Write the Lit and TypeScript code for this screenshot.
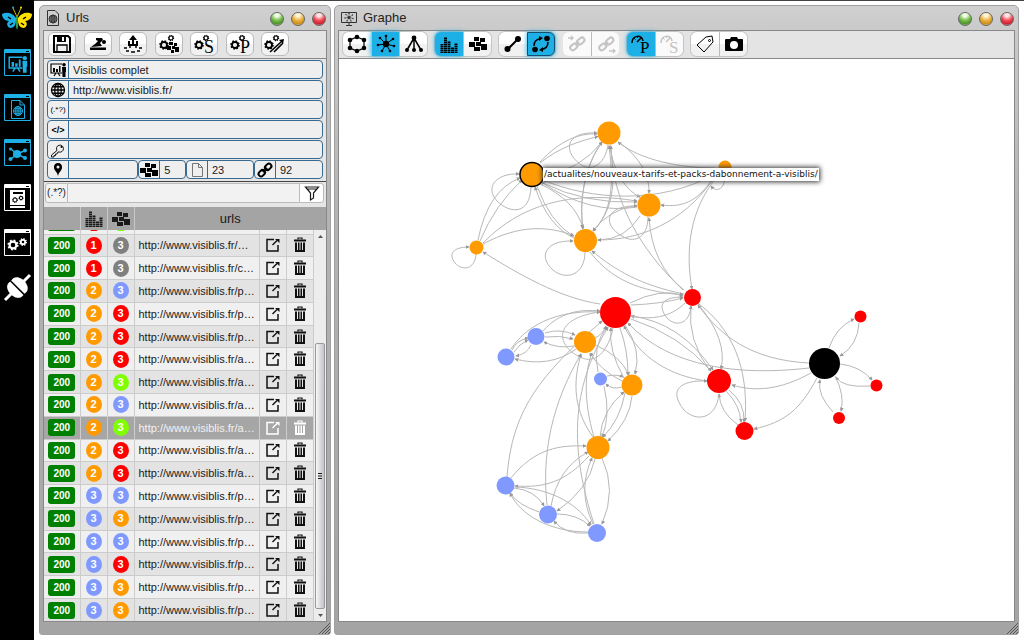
import { LitElement, html, svg, css, TemplateResult } from "lit";
import { classMap } from "lit/directives/class-map.js";

/* ---------- icon building blocks ---------- */

const icon = (w: number, h: number, body: unknown): TemplateResult =>
  html`<svg class="icon" width=${w} height=${h} viewBox="0 0 ${w} ${h}" aria-hidden="true">${body}</svg>`;

const dot = (x: number, y: number, r: number) => svg`<circle cx=${x} cy=${y} r=${r} fill="currentColor"/>`;

const line = (d: string, w = 1) =>
  svg`<path d=${d} fill="none" stroke="currentColor" stroke-width=${w}/>`;

const fill = (d: string) => svg`<path d=${d} fill="currentColor"/>`;

const gear = (x: number, y: number, r: number, w = 2) => {
  const tooth = (2 * Math.PI * (r + w / 2)) / 16;
  return svg`<circle cx=${x} cy=${y} r=${r} fill="none" stroke="currentColor" stroke-width=${w}/>
    <circle cx=${x} cy=${y} r=${r + w / 2} fill="none" stroke="currentColor" stroke-width=${w}
      stroke-dasharray="${tooth} ${tooth}"/>`;
};

const twoGears = svg`${gear(5, 11, 3, 1.8)}${gear(12, 4, 2, 1.2)}`;

const letter = (t: string, x: number, y: number, size = 14) =>
  svg`<text x=${x} y=${y} font-family="Liberation Serif, serif" font-size=${size} fill="currentColor">${t}</text>`;

const globe = (x: number, y: number, r: number, w = 1) => svg`<g fill="none" stroke="currentColor" stroke-width=${w}>
  <circle cx=${x} cy=${y} r=${r}/><ellipse cx=${x} cy=${y} rx=${r / 2} ry=${r}/>
  <path d="M${x} ${y - r}V${y + r}M${x - r} ${y}H${x + r}M${x - r * 0.85} ${y - r / 2}H${x + r * 0.85}M${x - r * 0.85} ${y + r / 2}H${x + r * 0.85}"/></g>`;

const blocks = icon(18, 16, fill("M5 1H10V5H5ZM11 2H16V6H11ZM0 6H6V11H0ZM7 6H12V10H7ZM5 11H11V15H5ZM12 8H18V14H12Z"));

const histogram = icon(18, 17, svg`<g stroke="currentColor" stroke-width="3" stroke-dasharray="1.4 .6">
  <path d="M2 17V8M5.500 17V1M9 17V5M12.500 17V11M16 17V7"/></g>`);

/* easel with a bar chart and a presenter on the right */
const bridge = (x: number, y: number) => svg`<g transform="translate(${x} ${y})">
  ${line("M12 1H1V10H12M4 13L6 10M10 13L8 10", 1.2)}${fill("M3 5H5V9H3ZM6 6H8V9H6ZM9 3H10.500V9H9Z")}
  ${dot(14, 1.8, 1.8)}${fill("M12 4H16V9H15.500V14H12.500Z")}</g>`;

const chain = svg`<g fill="none" stroke="currentColor" stroke-width="2" transform="rotate(-45 8 8)">
  <rect x="0" y="5.500" width="7" height="5" rx="2.500"/><rect x="9" y="5.500" width="7" height="5" rx="2.500"/>
  <path d="M5 8H11"/></g>`;

const chainPale = (arrow: string) => icon(20, 20, svg`<g transform="translate(3 2)"><g fill="none"
  stroke="currentColor" stroke-width="2" transform="rotate(-40 8 8)"><rect x="-1" y="5" width="8" height="5" rx="2.500"/>
  <rect x="8" y="5" width="8" height="5" rx="2.500"/><path d="M5 7.500H10"/></g></g>${line(arrow, 1.3)}`);

const dial = svg`${line("M1 9C1 1 11 0 12 7M6 8L10 4", 1.5)}${line("M3 4L4.500 5.500M6.500 2V4", 1)}`;

/* ---------- sidebar ---------- */

const frame = (body: unknown) =>
  icon(27, 27, svg`${line("M.5 .5H26.500V26.500H.5Z")}${fill("M1 1H26V4H1Z")}
    <path d="M22 2H25V3H22Z" fill="#000"/>${body}`);

const butterfly = icon(32, 27, svg`
  <path d="M15 14C11 8 5 8 1 10C1 14 4 17 8 17C5 19 6 23 9 24C13 24 15 21 15 16Z" fill="#1cb0e6"/>
  <path d="M17 14C21 8 27 8 31 10C31 14 28 17 24 17C27 19 26 23 23 24C19 24 17 21 17 16Z" fill="#ffe000"/>
  <path d="M16 13L12 4M16 13L20 4" stroke="#c9b800" fill="none"/>
  <circle cx="12" cy="3.500" r="1" fill="#1cb0e6"/><circle cx="20" cy="3.500" r="1" fill="#ffe000"/>
  <path d="M15 12H17V23L16 26L15 23Z" fill="#2f9a4a"/>
  <path d="M7 13L10 15M12 19L9 21M25 13L22 15M20 19L23 21" stroke="#000" stroke-width="1.500" fill="none"/>`);

const NAV = [
  { name: "Accueil", tone: "", art: butterfly },
  { name: "Projets", tone: "blue", art: frame(svg`<g transform="translate(4 7) scale(1.200)">${bridge(0, 0)}</g>`) },
  { name: "Urls", tone: "blue", art: frame(svg`${line("M7.500 6.500H16L20.500 11V24.500H7.500Z")}${line("M16 6.500V11H20")}${globe(14, 17, 4.5)}`) },
  { name: "Graphe", tone: "blue", art: frame(svg`${line("M13 15L7 10M13 15L20 12M13 15L21 19M13 15L7 20", 1.5)}
      ${dot(13, 15, 4)}${dot(6.5, 10, 1.5)}${dot(21, 11.5, 2)}${dot(21, 19, 2)}${dot(6.5, 20, 2)}`) },
  { name: "Rapports", tone: "white", art: frame(svg`${fill("M6 6H21V24H6Z")}<g color="#000">
      ${fill("M9 8H19V10H9ZM6 21H21V22H6Z")}${gear(11, 16, 2, 1)}${gear(17, 14, 1.6, 1)}</g>`) },
  { name: "Réglages", tone: "white", art: frame(svg`${gear(9, 16, 3.4, 2.2)}${gear(19, 13, 2.2, 1.8)}`) },
  { name: "Connexion", tone: "white", art: icon(27, 27, svg`${line("M26 1L19 8M8 19L1 26", 3)}
      <g transform="rotate(45 13.500 13.500)">
      ${fill("M4 13V10C5 2 22 2 23 10V13ZM4 14.500V17C5 25 22 25 23 17V14.500Z")}</g>`) },
];

/* ---------- toolbars ---------- */

const URL_TOOLS = [
  { name: "Enregistrer", art: icon(20, 20, svg`${line("M2 2H16L18 4V18H2Z", 2)}${fill("M5 2H14V8H5Z")}${line("M5 18V11H15V18", 1.3)}
      <path d="M10 3H12V7H10Z" fill="#fff"/>`) },
  { name: "Explorer", art: icon(20, 18, svg`${fill("M8 3L14 3L15 5L12 8L14 11L3 12L7 9L10 6L8 5Z")}${dot(16, 7, 2)}${fill("M2 12.500H18V15H2Z")}`) },
  { name: "Importer", art: icon(20, 20, svg`${line("M6 7V11H14V7M10 10V5", 2)}${fill("M6 6L10 1L14 6Z")}
      ${line("M1 14H4M6 13H8M12 13H14M16 14H19M3 17H6M8 18H12M14 17H17", 1.4)}`) },
  { name: "Calculer les groupes", art: icon(20, 20, svg`${twoGears}${fill("M10 8H14V11H10ZM15 9H18V12H15ZM8 12H12V16H8ZM13 12H16V15H13ZM12 16H15V19H12ZM16 13H20V18H16Z")}`) },
  { name: "Calculer S", art: icon(20, 20, svg`${twoGears}${letter("S", 10, 19, 18)}`) },
  { name: "Calculer P", art: icon(20, 20, svg`${twoGears}${letter("P", 10, 19, 18)}`) },
  { name: "Calculer les liens", art: icon(22, 20, svg`${twoGears}${line("M6 18L17 8M10 18L19 9", 1.6)}${fill("M15 6L20 5L19 10Z")}`) },
];

const star = svg`${line("M10 10L4 4M10 10L10 2M10 10L17 5M10 10L18 12M10 10L14 17M10 10L6 17M10 10L2 11", 1)}
  ${dot(10, 10, 3.2)}${dot(4, 4, 1.3)}${dot(10, 2, 1.3)}${dot(17, 5, 1.3)}${dot(18, 12, 1.3)}${dot(14, 17, 1.3)}${dot(6, 17, 1.3)}${dot(2, 11, 1.3)}`;

const GRAPH_TOOLS = [
  { off: false, items: [
    { name: "Cercle", on: false, art: icon(20, 20, svg`${line("M10 3L17 6V14L10 17L3 14V6Z", 1.2)}
        ${dot(10, 3, 2.3)}${dot(17, 6, 2.3)}${dot(17, 14, 2.3)}${dot(10, 17, 2.3)}${dot(3, 14, 2.3)}${dot(3, 6, 2.3)}`) },
    { name: "Force", on: true, art: icon(20, 20, star) },
    { name: "Arbre", on: false, art: icon(20, 20, svg`${line("M10 4L3 16M10 4V16M10 4L17 16", 1.5)}
        ${dot(10, 4, 2.4)}${dot(3, 16, 2)}${dot(10, 16, 2)}${dot(17, 16, 2)}`) } ] },
  { off: false, items: [
    { name: "Niveaux", on: true, art: histogram },
    { name: "Groupes", on: false, art: blocks } ] },
  { off: false, items: [
    { name: "Lien simple", on: false, art: icon(20, 20, svg`${line("M5 15L15 5", 2)}${dot(4.5, 15, 3)}${dot(15, 5, 3)}`) },
    { name: "Liens orientés", on: true, framed: true, art: icon(20, 20, svg`${line("M3 12C3 7 6 5 10 4.500M17 8C17 13 14 15 10 15.500", 1.6)}
        ${dot(16, 4.5, 2.8)}${dot(4, 15.5, 2.8)}${fill("M8 2V7L12 4ZM12 13V18L8 16Z")}`) } ] },
  { off: true, items: [
    { name: "Liens entrants", on: false, art: chainPale("M1 4H6M4 2L6 4L4 6") },
    { name: "Liens sortants", on: false, art: chainPale("M13 17H19M17 15L19 17L17 19") } ] },
  { off: false, items: [
    { name: "Poids P", on: true, art: icon(20, 20, svg`${dial}${letter("P", 9, 19, 17)}`) },
    { name: "Poids S", on: false, off: true, art: icon(20, 20, svg`${dial}${letter("S", 9, 19, 17)}`) } ] },
  { off: false, items: [
    { name: "Étiquettes", on: false, art: icon(20, 20, svg`${line("M2 11L11 3L17 2L18 8L9 18Z", 1)}${line("M13.500 6.500A1 1 0 1 0 15.500 6.500A1 1 0 1 0 13.500 6.500")}`) },
    { name: "Capture", on: false, art: icon(20, 18, svg`${fill("M2 4H6L7 2H13L14 4H18Q19 4 19 5V15Q19 16 18 16H2Q1 16 1 15V5Q1 4 2 4Z")}
        <circle cx="10" cy="10" r="4" fill="#fff"/>`) } ] },
];

/* ---------- project fields ---------- */

const FIELDS = [
  { name: "Projet", value: "Visiblis complet", art: icon(18, 15, bridge(1, 1)) },
  { name: "Adresse", value: "http://www.visiblis.fr/", art: icon(16, 16, globe(8, 8, 6.5, 1.3)) },
  { name: "Filtre", value: "", art: html`<span class="glyph">(.*?)</span>` },
  { name: "Balise", value: "", art: html`<span class="glyph strong">&lt;/&gt;</span>` },
  { name: "Clé", value: "", art: icon(16, 16, svg`${line("M7 8.500A3.500 3.500 0 1 1 9 10L8 10L7 12H5.500V13.500H4V15H1.500V13L7 8.500Z", 0.9)}${dot(11.5, 5, 1)}`) },
];

const STATS = [
  { name: "Position", value: "", cls: "s0", art: icon(16, 16, svg`<path fill="currentColor" fill-rule="evenodd"
      d="M8 1A4 4 0 0 1 12 5.500C12 9 8 10 8 15C8 10 4 9 4 5.500A4 4 0 0 1 8 1ZM8 3.500A1.500 1.500 0 1 0 8 6.500A1.500 1.500 0 1 0 8 3.500Z"/>`) },
  { name: "Groupes", value: "5", cls: "s1", art: blocks },
  { name: "Pages", value: "23", cls: "s2", art: icon(16, 16, svg`<g color="#777">${line("M3.500 1.500H9.500L13.500 5.500V14.500H3.500ZM9.500 1.500V5.500H13.500")}</g>`) },
  { name: "Liens", value: "92", cls: "s3", art: icon(16, 16, chain) },
];

/* ---------- url rows ---------- */

type Row = [number, string, number, string, string];
const ROWS: Row[] = [
  [1, "red", 3, "gray", "…"],
  [1, "red", 3, "gray", "c…"],
  [2, "orange", 3, "sky", "p…"],
  [2, "orange", 3, "red", "p…"],
  [2, "orange", 3, "red", "p…"],
  [2, "orange", 3, "red", "a…"],
  [2, "orange", 3, "lime", "a…"],
  [2, "orange", 3, "sky", "a…"],
  [2, "orange", 3, "lime", "a…"],
  [2, "orange", 3, "red", "a…"],
  [2, "orange", 3, "red", "a…"],
  [3, "sky", 3, "sky", "p…"],
  [3, "sky", 3, "orange", "p…"],
  [3, "sky", 3, "sky", "p…"],
  [3, "sky", 3, "red", "p…"],
  [3, "sky", 3, "orange", "p…"],
  [3, "sky", 3, "orange", "p…"],
];
const SELECTED = 8;

const openIcon = icon(16, 16, svg`${line("M9 2.500H2V14H13V8", 1.5)}${line("M7.500 8L12 3.500", 1.5)}${fill("M10 2H14.500V6Z")}`);
const trashIcon = icon(14, 16, svg`${line("M5 2.500V1H9V2.500", 1.2)}${fill("M1 2.500H13V4.500H1ZM2 5.500H4V14H2ZM5 5.500H6.500V14H5ZM7.500 5.500H9V14H7.500ZM10 5.500H12V14H10ZM2 13H12V15H2Z")}`);

/* ---------- graph ---------- */

const NODES: [number, number, number, string][] = [
  [609, 133, 11.5, "#ff9b00"], [725, 167, 6.5, "#ff9b00"], [649, 205, 11.5, "#ff9b00"],
  [585.5, 240.5, 11.5, "#ff9b00"], [476.5, 247.5, 7, "#ff9b00"], [615.5, 312.5, 15.5, "#f00"],
  [692.5, 297.5, 8.5, "#f00"], [536, 336.5, 8.5, "#8099ff"], [506, 357, 8.5, "#8099ff"],
  [585, 342, 11, "#ff9b00"], [600.5, 379, 6.5, "#8099ff"], [632, 385, 10.5, "#ff9b00"],
  [598, 447.5, 11.5, "#ff9b00"], [505.5, 485.5, 9, "#8099ff"], [548, 514.5, 9, "#8099ff"],
  [597, 533, 9, "#8099ff"], [719, 381, 12, "#f00"], [744.5, 431, 9, "#f00"],
  [824.5, 363.5, 15.5, "#000"], [860.5, 316.5, 6, "#f00"], [876.5, 385.5, 6, "#f00"], [839, 418, 6, "#f00"],
];

const EDGES = [
  "M540 162C560 140 580 133 597 134", "M540 163C560 147 580 141 598 136.500",
  "M608 145C605 163 594 171 583 166C563 154 563 131 597 133",
  "M583 228C578 195 588 160 602 142", "M602 143C588 160 578 195 583 229",
  "M545 175Q580 170 602 142", "M610 145C617 185 612 212 593 231",
  "M610 146C613 170 625 190 640 197", "M683 290C640 250 612 200 611 146",
  "M593 231C612 212 614 185 609 146",
  "M715 168C680 168 640 160 618 142", "M619 142Q650 165 649 193",
  "M715 174C660 205 590 200 543 180", "M543 183Q585 204 637 202", "M637 207Q590 215 541 182",
  "M537 186Q550 222 573 236", "M574 238Q548 226 535 187", "M540 184Q575 200 583 228",
  "M478 240Q488 190 520 178", "M480 241Q495 205 522 180",
  "M531 187C530 215 510 214 497 201C485 188 495 173 519 174",
  "M483 243C520 205 570 190 637 201", "M483 244C520 224 550 226 574 236",
  "M476 254C475 270 462 271 455 263C448 254 453 247 469 247",
  "M600 304C560 298 520 275 483 252",
  "M585 252C585 275 566 281 553 270C538 257 545 240 573 241",
  "M716 175C690 215 650 240 598 240", "M716 173C700 200 685 208 661 205",
  "M716 178C690 210 685 250 692 289", "M725 173C726 190 716 193 711 186",
  "M640 216Q625 240 598 240", "M637 205Q608 210 593 231",
  "M648 217C648 240 632 243 622 236C602 225 605 205 637 206",
  "M684 290Q652 265 649 218", "M590 252C615 285 650 292 683 295", "M684 294C640 285 615 270 592 251",
  "M630 303Q660 288 683 295", "M631 305Q660 304 683 298", "M685 303C670 318 650 320 631 316",
  "M691 306C690 323 677 328 667 318C657 305 662 297 683 297",
  "M631 316Q680 322 713 370", "M631 319Q680 335 711 371",
  "M707 381C670 376 640 358 624 326", "M809 368C740 376 670 368 628 323",
  "M809 363C750 360 720 335 698 305", "M698 304Q728 340 721 369", "M710 371Q687 340 691 306",
  "M699 304C740 335 748 380 745 421", "M726 391Q740 405 741 422", "M729 390Q745 403 744 422",
  "M738 425Q720 412 719 394", "M719 394C716 420 696 422 684 410C668 390 680 380 707 381",
  "M811 373C780 390 755 392 732 385", "M817 378C800 410 785 422 754 429",
  "M829 348Q836 327 854 319", "M859 323Q858 345 840 356",
  "M840 364Q860 366 872 380", "M870 386Q842 388 836 377",
  "M835 376Q845 395 841 411", "M833 412Q817 395 820 380",
  "M543 331C560 312 580 309 600 311", "M511 349C530 320 565 310 600 312",
  "M545 333Q560 328 575 335", "M545 337Q560 335 573 339", "M574 346Q558 349 544 342",
  "M512 350Q517 340 528 338", "M514 352Q519 344 528 340", "M531 345Q527 354 516 356",
  "M576 349Q550 368 515 359", "M613 328C608 352 595 365 580 357C555 345 553 318 600 312",
  "M507 477C512 410 540 375 602 321", "M547 505C540 440 560 390 581 354",
  "M594 524C570 450 570 390 608 327", "M593 437C570 405 575 375 581 354",
  "M594 437C583 400 585 370 592 353", "M595 345Q620 355 629 375",
  "M607 376Q617 374 623 377", "M622 387Q612 390 606 384", "M598 372Q592 345 607 327",
  "M620 328Q628 350 628 375", "M625 325Q642 350 635 374", "M624 378Q608 350 611 328",
  "M622 381Q600 370 590 353", "M595 338Q603 334 606 326",
  "M632 396Q630 420 608 441", "M600 437Q602 410 624 392", "M625 393Q620 420 603 437", "M604 386Q611 415 602 437",
  "M511 478C535 448 560 445 586 446", "M589 456C565 482 545 488 515 486",
  "M551 506Q558 468 588 452", "M595 459Q588 490 557 511",
  "M602 458Q617 490 602 524", "M593 524Q577 490 592 458",
  "M514 488Q535 490 544 506", "M515 487C545 488 575 500 591 525",
  "M557 514Q577 514 590 526", "M588 533Q565 535 554 521",
  "M539 512Q518 505 510 493", "M588 532C550 532 520 515 510 493",
];

class AppRoot extends LitElement {
  static properties = { selected: { state: true } };
  declare selected: number;

  constructor() {
    super();
    this.selected = SELECTED;
  }

  static styles = css`
    :host { display: flex; height: 100vh; overflow: hidden; background: #fff; color: #1a1a1a;
      font: 11px/16px "Liberation Sans", Arial, sans-serif; }
    *, *::before, *::after { box-sizing: border-box; }
    button, input { font: inherit; color: inherit; margin: 0; padding: 0; border: 0; background: none; }
    .icon { display: block; flex: none; overflow: visible; }

    .rail { flex: none; width: 34px; background: #000; display: flex; flex-direction: column;
      align-items: center; gap: 18px; padding-top: 4px; }
    .rail button { height: 27px; display: grid; place-items: center; color: #fff; }
    .rail .blue { color: #1cb0e6; }

    .desk { flex: 1; min-width: 0; display: flex; gap: 3px; padding: 4px 5px 5px; border-top: 1px solid #444; }
    .panel { display: flex; flex-direction: column; border: 1px solid #a0a0a0; border-radius: 5px 5px 3px 3px;
      padding: 0 3px; background: linear-gradient(#d0d0d0, #cacaca 24px, #b4b4b4 200px, #a4a4a4); }
    .urls { flex: none; width: 292px; }
    .graph { flex: 1; min-width: 0; }
    .head { flex: none; height: 24px; display: flex; align-items: center; gap: 6px; padding: 0 1px 0 3px; }
    .head h2 { flex: 1; margin: 0; font-size: 13px; line-height: 24px; font-weight: normal; color: #222; }
    .head .icon { color: #333; }
    .lights { display: flex; gap: 7px; padding-top: 1px; }
    .lights button { width: 14px; height: 14px; border-radius: 50%; border: 1px solid #666; }
    .lights .min { background: radial-gradient(circle at 50% 15%, #f2ffe8 0 15%, #77bb4e 50%, #4c962c 75%, #b5e59a); }
    .lights .max { background: radial-gradient(circle at 50% 15%, #fff6dd 0 15%, #eab03c 50%, #cf8f1c 75%, #ffe38a); }
    .lights .close { background: radial-gradient(circle at 50% 15%, #ffe9ec 0 15%, #ee4a55 50%, #d02330 75%, #ffa0a5); }

    .body { flex: 1; min-height: 0; display: flex; flex-direction: column; border: 1px solid #888; background: #eee; }
    .foot { flex: none; height: 12px; display: flex; justify-content: flex-end; margin-right: -3px; color: #555; }

    .bar { flex: none; height: 28px; display: flex; align-items: center; padding-bottom: 1px; border-bottom: 1px solid #888; background: #e4e4e4; }
    .bar button { width: 28px; height: 24px; display: grid; place-items: center; color: #000;
      background: linear-gradient(#fff 50%, #f1f1f1 50%); }
    .tools { justify-content: space-between; padding: 0 37px 1px 4px; }
    .tools button { border: 1px solid #bbb; border-radius: 6px; }
    .groups { gap: 8px; padding-left: 4px; }
    .group { display: flex; height: 24px; border-radius: 6px; box-shadow: 0 0 0 1px #c4c4c4; }
    .group button + button { border-left: 1px solid #bbb; }
    .group button:first-child { border-radius: 6px 0 0 6px; }
    .group button:last-child { border-radius: 0 6px 6px 0; }
    .group .on { background: #1cb0e6; box-shadow: 0 0 5px #1cb0e6; }
    .group .framed { border: 1px solid #14506e; }
    .bar .group .off { color: #c4c4c4; background: #fafafa; }
    .bar .pale { box-shadow: none; }

    .fields { flex: none; display: grid; grid-template-columns: minmax(0, 1fr); gap: 1px; padding: 1px 3px 2px;
      border-bottom: 1px solid #444; background: #e6e6e6; }
    .field { display: flex; height: 19px; border: 1px solid #3a6a90; border-radius: 4px; background: #efefef; overflow: hidden; }
    .field .tag { flex: none; width: 21px; display: grid; place-items: center; border-right: 1px solid #3a6a90; color: #000; }
    .field input { flex: 1; width: 0; min-width: 0; padding: 0 4px; }
    .glyph { font-size: 8px; line-height: 16px; }
    .strong { font-weight: bold; font-size: 9px; }
    .stats { display: flex; }
    .stats .field { min-width: 0; flex-basis: 0; }
    .s0 { flex-grow: 92; } .s1 { flex-grow: 47; } .s2 { flex-grow: 68; } .s3 { flex-grow: 69; }

    .filter { flex: none; height: 25px; display: flex; padding: 1px 2px 4px 1px; background: #e6e6e6; }
    .filter label { width: 23px; display: grid; place-items: center; font-size: 10px; border: 1px solid #bbb; border-radius: 3px 0 0 3px; background: #f2f2f2; }
    .filter input { flex: 1; min-width: 0; padding: 0 4px; border: 1px solid #bbb; border-width: 1px 0; background: #f2f2f2; }
    .filter button { width: 25px; display: grid; place-items: center; border: 1px solid #bbb; border-radius: 0 3px 3px 0; background: #fff; }

    table { width: 100%; border-collapse: collapse; table-layout: fixed; }
    .c-code { width: 36px; } .c-num { width: 27px; } .c-act { width: 27px; }
    .hd { flex: none; background: #a4a4a4; }
    .hd th { height: 23px; padding: 0; font-weight: normal; font-size: 13px; border-right: 1px solid #c8c8c8; }
    .hd th:last-child { border-right: 0; }
    .hd .icon { margin: auto; }
    .listing { flex: 1; min-height: 0; display: flex; }
    .scroll { flex: 1; min-width: 0; min-height: 0; overflow: hidden; display: flex; flex-direction: column; justify-content: flex-end; }
    .rows { flex: none; height: 393px; margin-bottom: -1px; }
    .rows tr { background: #e3e3e3; }
    .rows tr:nth-child(odd) { background: #f0f0f0; }
    .rows tr.sel { background: #a6a6a6; color: #f2f2f2; }
    .rows td { padding: 0; border: 1px solid #ccc; border-left: 0; white-space: nowrap; overflow: hidden; line-height: 16px; }
    .rows td.url { padding-left: 4px; }
    .rows .peek td { height: 5px; border-top: 0; }
    .rows a { color: inherit; text-decoration: none; }
    .rows button { display: grid; place-items: center; width: 100%; color: #111; }
    .rows .sel button { color: #fff; }
    .code, .pill { display: block; margin: 0 auto; color: #fff; font-weight: bold; line-height: 17px; text-align: center; }
    .code { width: 27px; border-radius: 3px; background: #008000; font-size: 10px; }
    .pill { width: 16px; border-radius: 50%; }
    .peek .code { height: 2px; border-radius: 0 0 2px 2px; margin-bottom: 2px; }
    .peek .pill { width: 8px; height: 2px; border-radius: 0 0 4px 4px; margin-bottom: 2px; }
    .red { background: #f00; } .orange { background: #ff9b00; } .sky { background: #8099ff; }
    .gray { background: #808080; } .lime { background: #7fff00; }

    .track { flex: none; width: 12px; display: flex; flex-direction: column; background: #ededed; }
    .arrow { flex: none; height: 12px; display: grid; place-items: center; color: #555; }
    .gap { flex: 102; }
    .thumb { flex: 265; margin: 0 1px; border: 1px solid #999; border-radius: 2px;
      background: linear-gradient(90deg, #f8f8f8, #dcdce0 50%, #c4c4c8); display: grid; place-items: center; }

    .canvas { flex: 1; min-height: 0; position: relative; background: #fff; overflow: hidden; }
    .net { display: block; width: 100%; height: 100%; }
    .tip { position: absolute; left: 204px; top: 109px; padding: 0 1px; background: #fff; color: #111; white-space: nowrap;
      font: 9px/13px "DejaVu Sans", sans-serif; box-shadow: 0 0 5px 1px #333; }
  `;

  private lights() {
    return html`<div class="lights">
      <button class="min" aria-label="Réduire"></button>
      <button class="max" aria-label="Agrandir"></button>
      <button class="close" aria-label="Fermer"></button>
    </div>`;
  }

  private foot() {
    return html`<div class="foot">${icon(12, 12, line("M1 12L12 1M4 12L12 4M7 12L12 7M10 12L12 10", 1))}</div>`;
  }

  private row(r: Row, i: number) {
    return html`<tr class=${classMap({ sel: i === this.selected })} @click=${() => (this.selected = i)}>
      <td><span class="code">200</span></td>
      <td><span class="pill ${r[1]}">${r[0]}</span></td>
      <td><span class="pill ${r[3]}">${r[2]}</span></td>
      <td class="url"><a href="#url-${i}">http://www.visiblis.fr/${r[4]}</a></td>
      <td><button aria-label="Ouvrir">${openIcon}</button></td>
      <td><button aria-label="Supprimer">${trashIcon}</button></td>
    </tr>`;
  }

  private field(f: { name: string; value: string; art: TemplateResult; cls?: string }) {
    const id = `f-${f.name}-${f.cls ?? "p"}`;
    return html`<div class="field ${f.cls ?? ""}">
      <label class="tag" for=${id} aria-label=${f.name}>${f.art}</label>
      <input id=${id} .value=${f.value} />
    </div>`;
  }

  private urlsPanel() {
    return html`<section class="panel urls">
      <header class="head">
        ${icon(14, 16, svg`${line("M1.500 .5H9L12.500 4V15.500H1.500Z")}${globe(7, 9, 4)}`)}
        <h2>Urls</h2>${this.lights()}
      </header>
      <div class="body">
        <div class="bar tools">${URL_TOOLS.map((t) => html`<button aria-label=${t.name}>${t.art}</button>`)}</div>
        <div class="fields">
          ${FIELDS.map((f) => this.field(f))}
          <div class="stats">${STATS.map((s) => this.field(s))}</div>
        </div>
        <div class="filter">
          <label for="filter">(.*?)</label><input id="filter" />
          <button aria-label="Filtrer">${icon(16, 16, line("M1.500 2H14.500L9.500 8V13L6.500 15V8ZM3 4H13", 1.2))}</button>
        </div>
        <table class="hd">
          <colgroup><col class="c-code" /><col class="c-num" /><col class="c-num" /><col /></colgroup>
          <thead><tr><th></th><th aria-label="Niveau">${histogram}</th><th aria-label="Groupe">${blocks}</th>
            <th>urls</th></tr></thead>
        </table>
        <div class="listing">
          <div class="scroll">
            <table class="rows">
              <colgroup><col class="c-code" /><col class="c-num" /><col class="c-num" /><col /><col class="c-act" /><col class="c-act" /></colgroup>
              <tbody>
                <tr class="peek" aria-hidden="true"><td><span class="code"></span></td><td><span class="pill red"></span></td>
                  <td><span class="pill lime"></span></td><td></td><td></td><td></td></tr>
                ${ROWS.map((r, i) => this.row(r, i))}
              </tbody>
            </table>
          </div>
          <div class="track">
            <div class="arrow">${icon(5, 3, fill("M0 3L2.500 0L5 3Z"))}</div>
            <div class="gap"></div>
            <div class="thumb">${icon(4, 6, line("M0 .5H4M0 3H4M0 5.500H4"))}</div>
            <div class="arrow">${icon(5, 3, fill("M0 0L2.500 3L5 0Z"))}</div>
          </div>
        </div>
      </div>
      ${this.foot()}
    </section>`;
  }

  private graphPanel() {
    return html`<section class="panel graph">
      <header class="head">
        ${icon(16, 15, svg`${line("M.5 1.500H15.500V11.500H.5ZM5 14.500H11M8 12V14")}
          <g transform="translate(3 1.500) scale(.5)">${star}</g>`)}
        <h2>Graphe</h2>${this.lights()}
      </header>
      <div class="body">
        <div class="bar groups">
          ${GRAPH_TOOLS.map((g) => html`<div class="group ${classMap({ pale: g.off })}">
            ${g.items.map((t: any) => html`<button aria-label=${t.name}
              class=${classMap({ on: t.on, framed: !!t.framed, off: g.off || !!t.off })}>${t.art}</button>`)}
          </div>`)}
        </div>
        <div class="canvas">
          <svg class="net" role="img" aria-label="Graphe">
            <defs><marker id="head" viewBox="0 0 6 6" refX="5" refY="3" markerUnits="userSpaceOnUse" markerWidth="4" markerHeight="4" orient="auto">
              <path d="M0 0L6 3L0 6Z" fill="#999"/></marker></defs>
            <g transform="translate(-339 -59)">
              <g fill="none" stroke="#b8b8b8" stroke-width="1">
                ${EDGES.map((d) => svg`<path d=${d} marker-end="url(#head)"/>`)}
              </g>
              ${NODES.map((n) => svg`<circle cx=${n[0]} cy=${n[1]} r=${n[2]} fill=${n[3]}/>`)}
              <circle cx="532" cy="174.500" r="12" fill="#ff9b00" stroke="#000" stroke-width="1.500"/>
            </g>
          </svg>
          <div class="tip">/actualites/nouveaux-tarifs-et-packs-dabonnement-a-visiblis/</div>
        </div>
      </div>
      ${this.foot()}
    </section>`;
  }

  render() {
    return html`
      <nav class="rail">${NAV.map((n) => html`<button class=${n.tone} aria-label=${n.name}>${n.art}</button>`)}</nav>
      <main class="desk">${this.urlsPanel()}${this.graphPanel()}</main>`;
  }
}

customElements.define("app-root", AppRoot);
